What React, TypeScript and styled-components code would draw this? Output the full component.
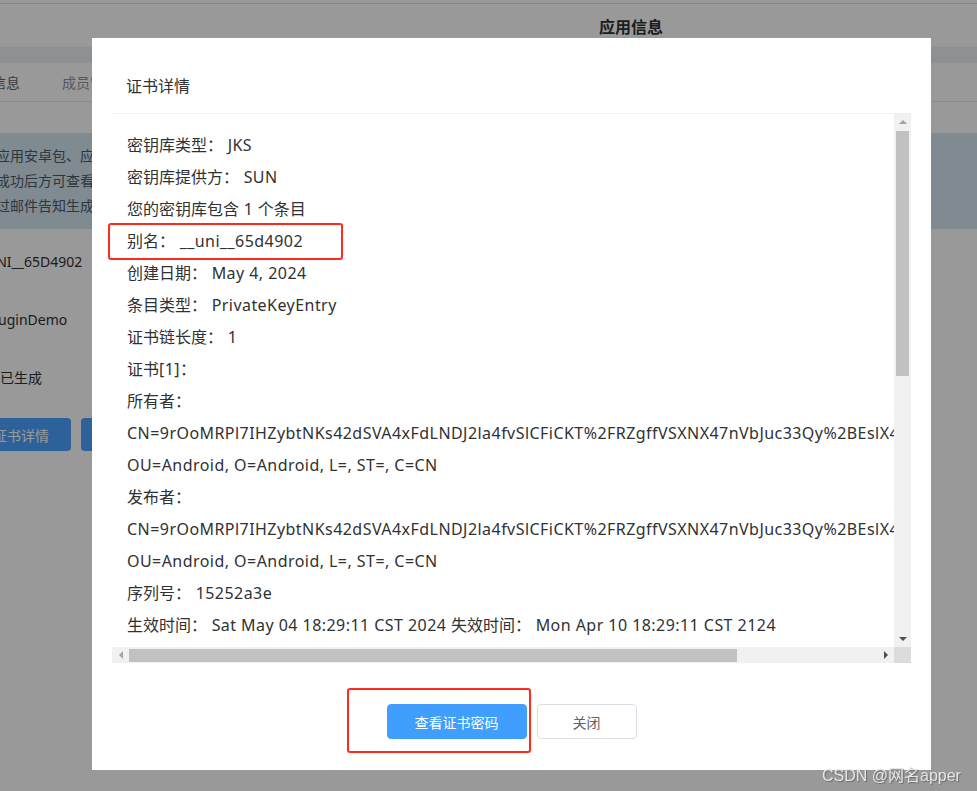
import React from 'react';
import styled, { createGlobalStyle, css } from 'styled-components';

const GlobalStyle = createGlobalStyle`
    html, body {
        margin: 0;
        padding: 0;
        overflow: hidden;
    }
    body {
        font-family: "Noto Sans", "Noto Sans CJK SC", sans-serif;
        color: #303133;
        background: #fff;
    }
`

// background page (dimmed by the dialog overlay)

const Page = styled.div`
    width: 977px;
    height: 791px;
    overflow: hidden;
    background: #fff;
`

const TopBar = styled.div`
    height: 43px;
    margin-top: 3px;
    border-top: 1px solid #e2e2e2;
    display: flex;
    align-items: center;
    padding-left: 599px;
    h2 {
        margin: 0;
        font-size: 16px;
        font-weight: 700;
        color: #303133;
    }
`

const Strip = styled.div`
    height: 16px;
    background: #eef0f2;
`

const Tabs = styled.div`
    height: 38px;
    display: flex;
    align-items: center;
    gap: 42px;
    margin-left: -8px;
    border-bottom: 1px solid #e4e7ed;
`

const Tab = styled.span<{ $active?: boolean }>`
    font-size: 14px;
    color: ${p => (p.$active ? '#606266' : '#909399')};
`

const Content = styled.div`
    margin-left: -14px;
    padding-top: 31px;
`

const Alert = styled.div`
    width: 1100px;
    height: 96px;
    box-sizing: border-box;
    padding: 10px 0 0 10px;
    margin-bottom: 4px;
    background: #d6e6f2;
    font-size: 14px;
    line-height: 25px;
    color: #4a5a66;
    p {
        margin: 0;
    }
`

const FormValue = styled.div<{ $indent?: number }>`
    font-size: 14px;
    line-height: 20px;
    height: 58px;
    display: flex;
    align-items: center;
    padding-left: ${p => p.$indent || 0}px;
    color: #303133;
`

const ActionRow = styled.div`
    display: flex;
    gap: 10px;
    margin-top: 11px;
    margin-left: -15px;
`

const BlueButton = styled.button`
    width: 100px;
    height: 33px;
    border: none;
    border-radius: 4px;
    background: #4aa3ff;
    color: #fff;
    font-family: inherit;
    font-size: 14px;
`

// dialog

const Overlay = styled.div`
    position: fixed;
    inset: 0;
    background: rgba(0, 0, 0, 0.4);
    padding: 38px 0 0 92px;
`

const Dialog = styled.div`
    width: 839px;
    height: 732px;
    background: #fff;
    display: flex;
    flex-direction: column;
`

const DialogHeader = styled.div`
    height: 75px;
    box-sizing: border-box;
    padding: 37px 34px 0;
    font-size: 16px;
    line-height: 22px;
    color: #303133;
`

const DialogBody = styled.div`
    padding: 0 20px;
`

const ScrollFrame = styled.div`
    height: 550px;
    display: grid;
    grid-template-columns: 1fr 17px;
    grid-template-rows: 534px 16px;
`

const Viewport = styled.div`
    overflow: hidden;
`

const VBar = styled.div`
    background: #f1f1f1;
    display: flex;
    flex-direction: column;
`

const HBar = styled.div`
    background: #f1f1f1;
    display: flex;
`

const Track = styled.div<{ $vertical?: boolean }>`
    flex: 1;
    display: flex;
    flex-direction: ${p => (p.$vertical ? 'column' : 'row')};
`

const Thumb = styled.div<{ $vertical?: boolean }>`
    background: #c1c1c1;
    ${p => p.$vertical
        ? css`margin: 1px 2px 0; height: 245px;`
        : css`margin: 2px 0 1px; width: 608px;`}
`

const Corner = styled.div`
    background: #dcdcdc;
`

const ArrowButton = styled.div<{ $h?: number }>`
    width: 17px;
    height: ${p => p.$h || 17}px;
    flex: none;
    display: flex;
    align-items: center;
    justify-content: center;
`

type Dir = 'up' | 'down' | 'left' | 'right'

const Triangle = styled.span<{ $dir: Dir; $dim?: boolean }>`
    width: 0;
    height: 0;
    ${p => {
        const c = p.$dim ? '#a3a3a3' : '#505050'
        switch (p.$dir) {
            case 'up':
                return css`border-left: 4px solid transparent; border-right: 4px solid transparent; border-bottom: 4px solid ${c};`
            case 'down':
                return css`border-left: 4px solid transparent; border-right: 4px solid transparent; border-top: 4px solid ${c};`
            case 'left':
                return css`border-top: 4px solid transparent; border-bottom: 4px solid transparent; border-right: 4px solid ${c};`
            default:
                return css`border-top: 4px solid transparent; border-bottom: 4px solid transparent; border-left: 4px solid ${c};`
        }
    }}
`

const CertText = styled.div`
    width: max-content;
    min-width: 100%;
    box-sizing: border-box;
    border-top: 1px solid #f0f0f0;
    padding: 15px 15px 12px;
    font-size: 16px;
    line-height: 32px;
    color: #303133;
    white-space: pre;
`

const Line = styled.div<{ $indent?: boolean }>`
    padding-left: ${p => (p.$indent ? '32px' : '0')};
`

// latin text in the original renders a bit wider than Noto Sans
const Latin = styled.span`
    letter-spacing: 0.45px;
`

const DialogFooter = styled.div`
    display: flex;
    justify-content: center;
    gap: 10px;
    padding-top: 41px;
`

const Button = styled.button<{ $primary?: boolean }>`
    height: 35px;
    width: ${p => (p.$primary ? '140px' : '100px')};
    border-radius: 4px;
    border: 1px solid ${p => (p.$primary ? '#409eff' : '#dcdfe6')};
    background: ${p => (p.$primary ? '#409eff' : '#fff')};
    color: ${p => (p.$primary ? '#fff' : '#606266')};
    font-family: inherit;
    font-size: 14px;
    cursor: pointer;
`

// screenshot annotations on top of everything

const Highlight = styled.div<{ $x: number; $y: number; $w: number; $h: number }>`
    position: fixed;
    left: ${p => p.$x}px;
    top: ${p => p.$y}px;
    width: ${p => p.$w}px;
    height: ${p => p.$h}px;
    box-sizing: border-box;
    border: 2px solid #ff2a1f;
    border-radius: 3px;
`

const Watermark = styled.div`
    position: fixed;
    left: 822px;
    top: 762px;
    font-family: "Liberation Sans", "Noto Sans CJK SC", sans-serif;
    font-size: 16px;
    color: #e6e6e6;
    text-shadow: 1px 1px 1px #6b6b6b;
`

const CN = 'CN=9rOoMRPl7IHZybtNKs42dSVA4xFdLNDJ2la4fvSlCFiCKT%2FRZgffVSXNX47nVbJuc33Qy%2BEslX4nq8Hw%3D%3D,'

const lines: { text: string; indent?: boolean }[] = [
    { text: '密钥库类型： JKS' },
    { text: '密钥库提供方： SUN' },
    { text: '您的密钥库包含 1 个条目' },
    { text: '别名： __uni__65d4902' },
    { text: '创建日期： May 4, 2024' },
    { text: '条目类型： PrivateKeyEntry' },
    { text: '证书链长度： 1' },
    { text: '证书[1]：' },
    { text: '所有者：' },
    { text: CN },
    { text: 'OU=Android, O=Android, L=, ST=, C=CN' },
    { text: '发布者：' },
    { text: CN },
    { text: 'OU=Android, O=Android, L=, ST=, C=CN' },
    { text: '序列号： 15252a3e' },
    { text: '生效时间： Sat May 04 18:29:11 CST 2024 失效时间： Mon Apr 10 18:29:11 CST 2124' },
    { text: '证书指纹：' },
    { text: 'SHA1: 3B:8E:21:C4:0F:92:5A:D7:6E:14:B9:A0:77:C3:2D:58:E1:0A:9F:46', indent: true },
    { text: 'SHA256: 7A:C1:54:E9:02:3F:B8:61:DD:4A:90:2E:F7:13:6C:85:A2:0B:E4:39', indent: true },
    { text: '签名算法名称： SHA256withRSA' },
    { text: '主体公共密钥算法： 2048 位 RSA 密钥' },
    { text: '版本： 3' },
    { text: '扩展：' },
    { text: '#1: ObjectId: 2.5.29.14 Criticality=false' },
    { text: 'SubjectKeyIdentifier [' },
    { text: 'KeyIdentifier [', indent: true },
    { text: '0000: 5E 1A 93 C7 0D 42 B8 6F 21 9A E0 34 7C 55 D1 08', indent: true },
    { text: '0010: 4B 2F 90 E6', indent: true },
    { text: ']', indent: true },
    { text: ']' },
]

// wrap the latin runs so they get the wider spacing, CJK stays as is
function renderRuns(text: string) {
    return text.split(/([\x20-\x7e]+)/).map((run, i) =>
        /[\x21-\x7e]/.test(run) ? <Latin key={i}>{run}</Latin> : run
    )
}

function App() {
    return (
        <>
            <GlobalStyle />
            <Page>
                <TopBar>
                    <h2>应用信息</h2>
                </TopBar>
                <Strip />
                <Tabs>
                    <Tab $active>信息</Tab>
                    <Tab>成员管理</Tab>
                </Tabs>
                <Content>
                    <Alert>
                        <p>应用安卓包、应用证书生成后可直接下载使用</p>
                        <p>成功后方可查看及下载证书</p>
                        <p>过邮件告知生成结果</p>
                    </Alert>
                    <FormValue>UNI__65D4902</FormValue>
                    <FormValue>PluginDemo</FormValue>
                    <FormValue $indent={14}>已生成</FormValue>
                    <ActionRow>
                        <BlueButton>证书详情</BlueButton>
                        <BlueButton>下载证书</BlueButton>
                    </ActionRow>
                </Content>
            </Page>

            <Overlay>
                <Dialog>
                    <DialogHeader>证书详情</DialogHeader>
                    <DialogBody>
                        <ScrollFrame>
                            <Viewport>
                                <CertText>
                                    {lines.map((l, i) => (
                                        <Line key={i} $indent={l.indent}>{renderRuns(l.text)}</Line>
                                    ))}
                                </CertText>
                            </Viewport>
                            <VBar>
                                <ArrowButton><Triangle $dir="up" $dim /></ArrowButton>
                                <Track $vertical>
                                    <Thumb $vertical />
                                </Track>
                                <ArrowButton><Triangle $dir="down" /></ArrowButton>
                            </VBar>
                            <HBar>
                                <ArrowButton $h={16}><Triangle $dir="left" $dim /></ArrowButton>
                                <Track>
                                    <Thumb />
                                </Track>
                                <ArrowButton $h={16}><Triangle $dir="right" /></ArrowButton>
                            </HBar>
                            <Corner />
                        </ScrollFrame>
                    </DialogBody>
                    <DialogFooter>
                        <Button $primary>查看证书密码</Button>
                        <Button>关闭</Button>
                    </DialogFooter>
                </Dialog>
            </Overlay>

            <Highlight $x={108} $y={223} $w={235} $h={37} />
            <Highlight $x={347} $y={688} $w={184} $h={65} />
            <Watermark>CSDN @网名apper</Watermark>
        </>
    )
}

export default App;
